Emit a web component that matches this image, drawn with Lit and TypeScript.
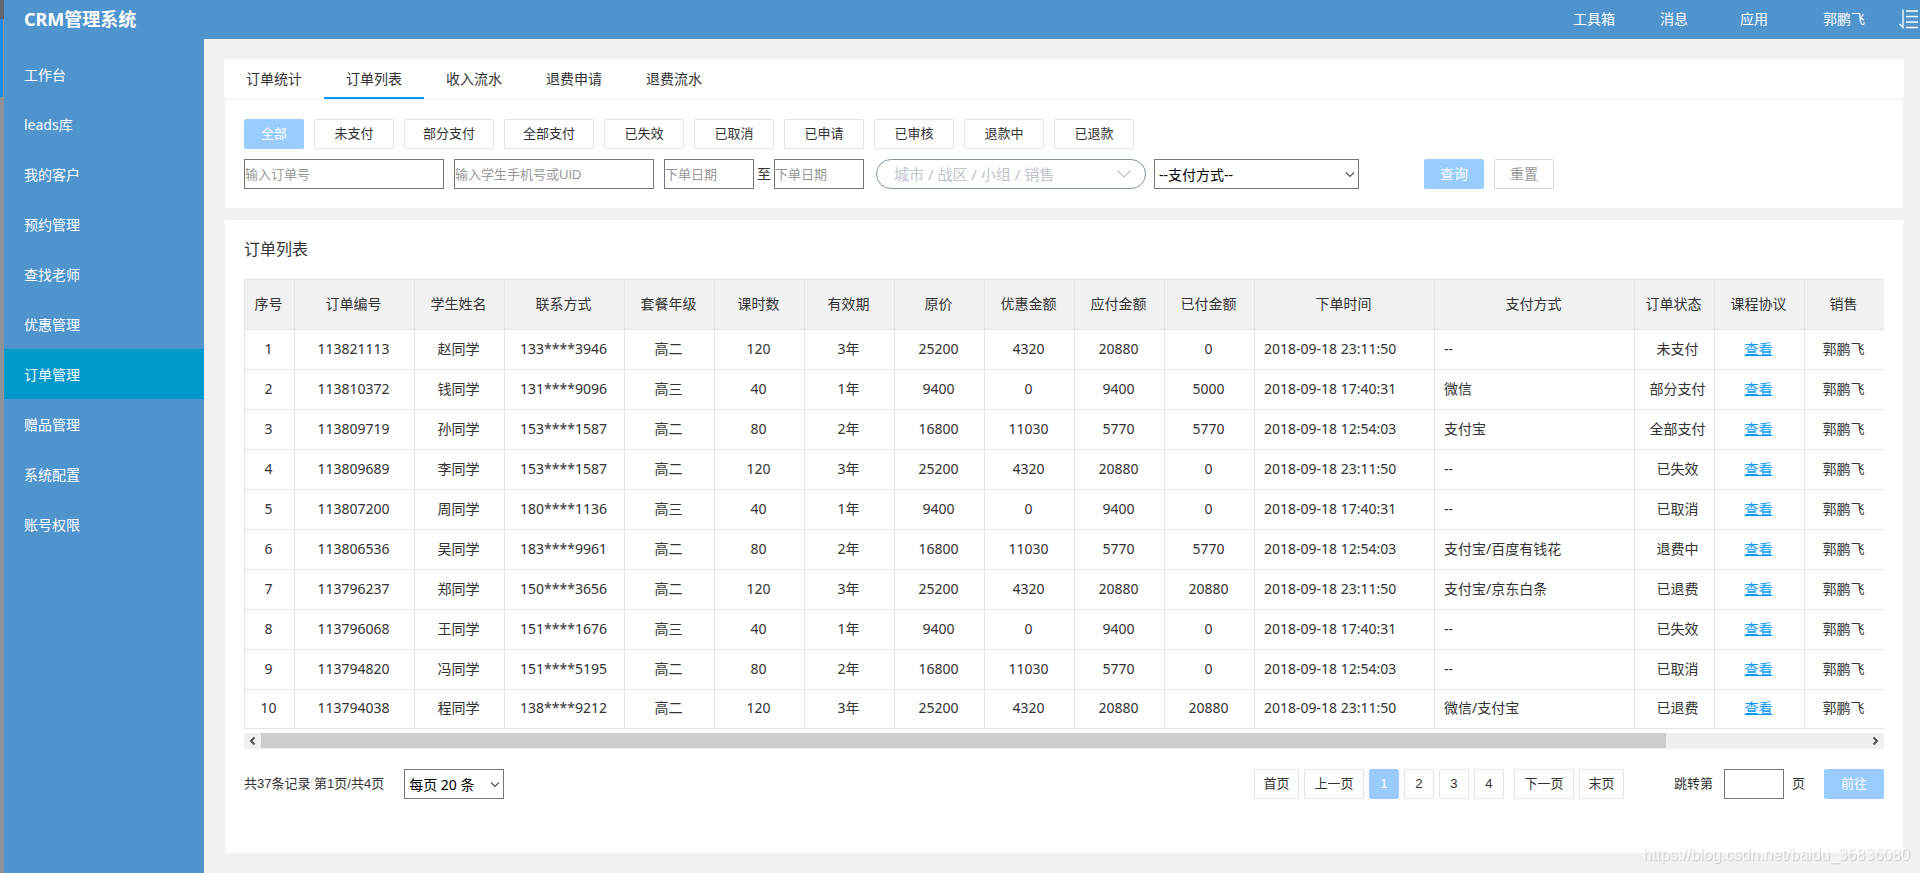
import { LitElement, html, css, svg } from "lit";
import { customElement, state, query } from "lit/decorators.js";
import { classMap } from "lit/directives/class-map.js";

interface Column {
  title: string;
  width: number;
  align?: "text" | "status";
}

const MENU = ["工作台", "leads库", "我的客户", "预约管理", "查找老师", "优惠管理", "订单管理", "赠品管理", "系统配置", "账号权限"];
const TABS = ["订单统计", "订单列表", "收入流水", "退费申请", "退费流水"];
const STATES = ["全部", "未支付", "部分支付", "全部支付", "已失效", "已取消", "已申请", "已审核", "退款中", "已退款"];

const COLUMNS: Column[] = [
  { title: "序号", width: 50 },
  { title: "订单编号", width: 120 },
  { title: "学生姓名", width: 90 },
  { title: "联系方式", width: 120 },
  { title: "套餐年级", width: 90 },
  { title: "课时数", width: 90 },
  { title: "有效期", width: 90 },
  { title: "原价", width: 90 },
  { title: "优惠金额", width: 90 },
  { title: "应付金额", width: 90 },
  { title: "已付金额", width: 90 },
  { title: "下单时间", width: 180, align: "text" },
  { title: "支付方式", width: 200, align: "text" },
  { title: "订单状态", width: 80, align: "status" },
  { title: "课程协议", width: 90 },
  { title: "销售", width: 80 },
];

const PLANS = [
  ["高二", "120", "3年", "25200", "4320", "20880", "2018-09-18 23:11:50"],
  ["高三", "40", "1年", "9400", "0", "9400", "2018-09-18 17:40:31"],
  ["高二", "80", "2年", "16800", "11030", "5770", "2018-09-18 12:54:03"],
];

// order number, student, phone, amount paid, payment method, state
const ORDERS = [
  ["113821113", "赵同学", "133****3946", "0", "--", "未支付"],
  ["113810372", "钱同学", "131****9096", "5000", "微信", "部分支付"],
  ["113809719", "孙同学", "153****1587", "5770", "支付宝", "全部支付"],
  ["113809689", "李同学", "153****1587", "0", "--", "已失效"],
  ["113807200", "周同学", "180****1136", "0", "--", "已取消"],
  ["113806536", "吴同学", "183****9961", "5770", "支付宝/百度有钱花", "退费中"],
  ["113796237", "郑同学", "150****3656", "20880", "支付宝/京东白条", "已退费"],
  ["113796068", "王同学", "151****1676", "0", "--", "已失效"],
  ["113794820", "冯同学", "151****5195", "0", "--", "已取消"],
  ["113794038", "程同学", "138****9212", "20880", "微信/支付宝", "已退费"],
];

// The orders cycle through the three plans.
const ROWS = ORDERS.map(([no, student, phone, paid, method, status], i) => {
  const [grade, hours, term, price, discount, due, time] = PLANS[i % 3];
  return [String(i + 1), no, student, phone, grade, hours, term, price, discount, due, paid, time, method, status, "查看", "郭鹏飞"];
});

const chevron = svg`<path d="M1 1.5 L5 5.5 L9 1.5" fill="none" stroke="currentColor" stroke-width="1.2"/>`;

@customElement("app-root")
export class AppRoot extends LitElement {
  static styles = css`
    :host {
      display: block;
      font: 14px/20px "Noto Sans", "Noto Sans CJK SC", sans-serif;
      color: #333;
    }
    * { box-sizing: border-box; }
    a { color: inherit; text-decoration: none; }
    button, input, select { font: inherit; color: inherit; margin: 0; }
    .page { display: flex; min-height: 100vh; background: #f1f1f1; }
    .edge { width: 4px; flex: none; background: #8f9399; display: flex; flex-direction: column; }
    .edge-top { height: 19px; background: #62656c; }
    .edge-mark { height: 78px; width: 3px; background: #1b8ce0; }
    .shell { flex: 1; min-width: 0; display: flex; flex-direction: column; }
    .header { height: 39px; background: #4f94cd; color: #fff; display: flex; align-items: center; padding: 0 0 2px 20px; }
    .brand { margin: 0; flex: 1; font-size: 18px; line-height: 26px; font-weight: 700; }
    .nav { display: flex; }
    .nav-link { width: 80px; text-align: center; }
    .nav-user { width: 100px; }
    .sort { border: 0; padding: 0; margin: 0 1px 0 5px; background: none; color: #fff; display: flex; }
    .body { flex: 1; display: flex; }
    .side { width: 200px; flex: none; background: #4f94cd; padding-top: 10px; }
    .side-link { display: block; padding: 16px 20px 14px; color: #fff; }
    .side-link.on { background: #0099cc; }
    .main { flex: 1; min-width: 0; display: flex; flex-direction: column; padding: 20px 16px 20px 20px; }
    .tabs { display: flex; height: 40px; background: #fff; }
    .tab { width: 100px; border: 0; border-bottom: 2px solid transparent; padding: 2px 0 0; background: none; text-align: center; }
    .tab.on { border-bottom-color: #0099ff; }
    .card { background: #fff; margin: 0 1px; padding: 19px; }
    .filters { margin-top: 1px; padding-bottom: 19px; display: flex; flex-direction: column; gap: 10px; }
    .row { display: flex; align-items: center; gap: 10px; }
    .btn { height: 30px; border: 1px solid #e4e4e4; border-radius: 2px; background: #fff; padding: 0; min-width: 80px; font-family: "Liberation Sans", "Noto Sans CJK SC", sans-serif; font-size: 13px; line-height: 20px; }
    .btn.long { min-width: 90px; }
    .btn.short { min-width: 60px; }
    .btn.fill { background: #99ccff; border-color: #99ccff; color: #fff; }
    .btn.big { font-size: 14px; }
    .btn.reset { color: #999; border-color: #d7d7d7; }
    .box { height: 30px; border: 1px solid #767676; border-radius: 0; background: #fff; padding: 1px 0; font-family: "Liberation Sans", "Noto Sans CJK SC", sans-serif; font-size: 13px; }
    .box::placeholder { color: #999; opacity: 1; }
    .w200 { width: 200px; }
    .w90 { width: 90px; }
    .range { display: flex; align-items: center; gap: 3px; }
    .pick { position: relative; display: flex; align-items: center; }
    .pick-arrow { position: absolute; right: 4px; color: #555; pointer-events: none; }
    .select { appearance: none; height: 30px; border: 1px solid #767676; border-radius: 0; background: #fff; color: #000; padding: 2px 4px 0; }
    .method { width: 205px; }
    .region { width: 270px; padding: 0 17px; font-size: 15px; color: #c0c4cc; border: 1px solid #8492a6; border-radius: 15px; }
    .region + .pick-arrow { right: 14px; color: #c0c4cc; }
    .areas { margin: 0 -2px 0 2px; }
    .actions { display: flex; gap: 10px; margin-left: 55px; }
    .orders { margin-top: 12px; flex: 1; display: flex; flex-direction: column; }
    .title { margin: 0 0 20px; font-size: 16px; line-height: 20px; font-weight: 400; }
    .scroller { overflow: hidden; }
    .table { table-layout: fixed; width: 100%; min-width: 1640px; border-collapse: separate; border-spacing: 0; }
    .cell { height: 40px; padding: 0 2px 2px 0; text-align: center; font-weight: 400; border: 0 solid #e4e4e4; border-width: 1px 0 0 1px; white-space: nowrap; }
    .head { height: 50px; background: #f1f1f1; }
    .last { border-bottom-width: 1px; }
    .cell.text { text-align: left; padding-left: 9px; }
    .cell.status { padding-left: 8px; }
    .view { color: #0099ff; text-decoration: underline; }
    .bar { margin-top: 4px; height: 16px; background: #f0f0f0; display: flex; padding-bottom: 1px; }
    .arrow { width: 17px; border: 0; padding: 0; background: none; color: #505050; display: flex; align-items: center; justify-content: center; }
    .track { flex: 1; display: grid; grid-template-columns: 7fr 1fr; }
    .thumb { background: #cdcdcd; }
    .pager { display: flex; align-items: center; margin-top: 20px; font-family: "Liberation Sans", "Noto Sans CJK SC", sans-serif; font-size: 13px; }
    .size { width: 100px; font-family: "Noto Sans", "Noto Sans CJK SC", sans-serif; font-size: 14px; }
    .count { margin-right: 20px; }
    .pages { display: flex; gap: 5px; margin-left: auto; }
    .pages .btn { min-width: 30px; }
    .pages .edge-btn { min-width: 45px; }
    .pages .step { min-width: 60px; }
    .pages .next { margin-left: 5px; }
    .jump { display: flex; align-items: center; margin-left: 50px; }
    .jump-box { width: 60px; margin: 0 8px 0 11px; }
    .go { margin-left: 19px; }
    .mark { position: fixed; right: 10px; bottom: 8px; font: 16px/20px "Liberation Sans", sans-serif; color: rgba(255, 255, 255, 0.7); text-shadow: 1px 1px 1px rgba(0, 0, 0, 0.17); pointer-events: none; }
  `;

  @state() private menu = 6;
  @state() private tab = 1;
  @state() private filter = 0;
  @state() private page = 1;
  @query(".scroller") private scroller!: HTMLElement;

  private scrollTable(by: number) {
    this.scroller.scrollBy({ left: by, behavior: "smooth" });
  }

  private renderHeader() {
    return html`<header class="header">
      <h1 class="brand">CRM管理系统</h1>
      <nav class="nav">
        <a class="nav-link" href="#tools">工具箱</a>
        <a class="nav-link" href="#news">消息</a>
        <a class="nav-link" href="#apps">应用</a>
        <a class="nav-link nav-user" href="#me">郭鹏飞</a>
      </nav>
      <button class="sort" aria-label="排序">
        <svg width="20" height="20" viewBox="0 0 20 20" fill="none" stroke="currentColor">
          <path d="M4 0.500 V18.500 L0.500 15" stroke-width="1.3" />
          <path d="M7 2 H19 M7 7.500 H19 M7 13 H19 M7 18.500 H19" stroke-width="1.3" />
        </svg>
      </button>
    </header>`;
  }

  private renderFilters() {
    return html`<section class="card filters">
      <div class="row">
        ${STATES.map((s, i) => html`<button
          class=${classMap({ btn: true, long: s.length === 4, short: s.length === 2, fill: i === this.filter })}
          @click=${() => (this.filter = i)}>${s}</button>`)}
      </div>
      <div class="row">
        <input class="box w200" aria-label="订单号" placeholder="输入订单号" />
        <input class="box w200" aria-label="学生手机号或UID" placeholder="输入学生手机号或UID" />
        <div class="range">
          <input class="box w90" id="from" aria-label="开始日期" placeholder="下单日期" />
          <label for="to">至</label>
          <input class="box w90" id="to" placeholder="下单日期" />
        </div>
        <div class="pick areas">
          <select class="select region" aria-label="销售范围"><option>城市 / 战区 / 小组 / 销售</option></select>
          <svg class="pick-arrow" width="16" height="10" viewBox="0 0 16 10"><path d="M1.5 1.5 L8 8 L14.5 1.5" fill="none" stroke="currentColor" stroke-width="1.2" /></svg>
        </div>
        <div class="pick">
          <select class="select method" aria-label="支付方式"><option>--支付方式--</option></select>
          <svg class="pick-arrow" width="10" height="7" viewBox="0 0 10 7">${chevron}</svg>
        </div>
        <div class="actions">
          <button class="btn short big fill">查询</button>
          <button class="btn short big reset">重置</button>
        </div>
      </div>
    </section>`;
  }

  private renderTable() {
    return html`<div class="scroller">
      <table class="table">
        <colgroup>${COLUMNS.map((c) => html`<col style="width:${c.width}px" />`)}</colgroup>
        <thead><tr>${COLUMNS.map((c) => html`<th class="cell head" scope="col">${c.title}</th>`)}</tr></thead>
        <tbody>
          ${ROWS.map((row, r) => html`<tr>${row.map((value, i) => html`<td
            class=${classMap({ cell: true, last: r === ROWS.length - 1, text: COLUMNS[i].align === "text", status: COLUMNS[i].align === "status" })}
            >${value === "查看" ? html`<a class="view" href="#order">${value}</a>` : value}</td>`)}</tr>`)}
        </tbody>
      </table>
    </div>
    <div class="bar">
      <button class="arrow" aria-label="向左" @click=${() => this.scrollTable(-90)}>
        <svg width="7" height="8" viewBox="0 0 7 8"><path d="M5.5 0.5 L2 4 L5.5 7.5" fill="none" stroke="currentColor" stroke-width="2" /></svg>
      </button>
      <div class="track"><div class="thumb"></div></div>
      <button class="arrow" aria-label="向右" @click=${() => this.scrollTable(90)}>
        <svg width="7" height="8" viewBox="0 0 7 8"><path d="M1.5 0.5 L5 4 L1.5 7.5" fill="none" stroke="currentColor" stroke-width="2" /></svg>
      </button>
    </div>`;
  }

  private renderPager() {
    return html`<div class="pager">
      <span class="count">共37条记录 第1页/共4页</span>
      <div class="pick">
        <select class="select size" aria-label="每页条数"><option>每页 20 条</option></select>
        <svg class="pick-arrow" width="10" height="7" viewBox="0 0 10 7">${chevron}</svg>
      </div>
      <div class="pages">
        <button class="btn edge-btn" @click=${() => (this.page = 1)}>首页</button>
        <button class="btn step" @click=${() => (this.page = Math.max(1, this.page - 1))}>上一页</button>
        ${[1, 2, 3, 4].map((n) => html`<button class=${classMap({ btn: true, fill: n === this.page })}
          @click=${() => (this.page = n)}>${n}</button>`)}
        <button class="btn step next" @click=${() => (this.page = Math.min(4, this.page + 1))}>下一页</button>
        <button class="btn edge-btn" @click=${() => (this.page = 4)}>末页</button>
      </div>
      <div class="jump">
        <label for="jump">跳转第</label>
        <input class="box jump-box" id="jump" />
        <span>页</span>
        <button class="btn short fill go">前往</button>
      </div>
    </div>`;
  }

  render() {
    return html`<div class="page">
      <div class="edge"><div class="edge-top"></div><div class="edge-mark"></div></div>
      <div class="shell">
        ${this.renderHeader()}
        <div class="body">
          <nav class="side">
            ${MENU.map((m, i) => html`<a href="#menu" class=${classMap({ "side-link": true, on: i === this.menu })}
              @click=${() => (this.menu = i)}>${m}</a>`)}
          </nav>
          <main class="main">
            <div class="tabs">
              ${TABS.map((t, i) => html`<button class=${classMap({ tab: true, on: i === this.tab })}
                @click=${() => (this.tab = i)}>${t}</button>`)}
            </div>
            ${this.renderFilters()}
            <section class="card orders">
              <h2 class="title">订单列表</h2>
              ${this.renderTable()}
              ${this.renderPager()}
            </section>
          </main>
        </div>
      </div>
      <div class="mark">https://blog.csdn.net/baidu_36836080</div>
    </div>`;
  }
}
